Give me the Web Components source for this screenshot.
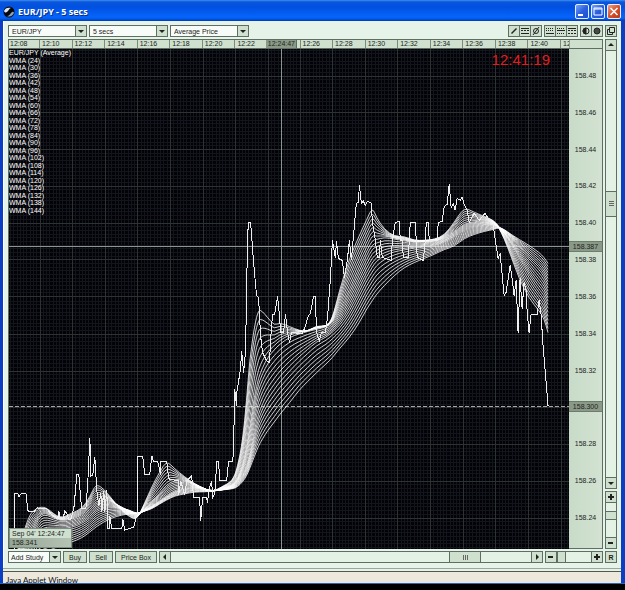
<!DOCTYPE html>
<html lang="en">
<head>
<meta charset="utf-8">
<title>EUR/JPY - 5 secs</title>
<style>
html,body{margin:0;height:100%;background:#000}
body{display:flex;flex-direction:column;font:7px/9px "Liberation Sans",Arial,sans-serif;color:#1c241c;
--panel:#e6f3e8;--face:#cfe0cf;--edge:#5f6e62;--mark:#8b9a88}
</style>
</head>
<body>
<app-window></app-window>
<script>
const define=(name,html,setup)=>customElements.define(name,class extends HTMLElement{
  connectedCallback(){
    if(this.shadowRoot)return;
    const t=document.createElement('template');
    t.innerHTML='<style>*{box-sizing:border-box}'+html;
    this.attachShadow({mode:'open'}).append(t.content.cloneNode(true));
    if(setup)setup.call(this,this.shadowRoot);
  }
});

define('tool-button',`
:host{display:flex;min-width:12px;height:12px}
button{flex:1;display:flex;align-items:center;justify-content:center;margin:0;padding:0 4px;border:1px solid var(--edge);background:var(--face);color:inherit;font:inherit;white-space:nowrap}
:host([icon]) button{padding:0}
::slotted(svg){display:block;width:10px;height:10px}
</style><button type="button"><slot></slot></button>`,function(r){
  const l=this.getAttribute('label');if(l)r.querySelector('button').setAttribute('aria-label',l);
});

define('combo-box',`
:host{display:grid;height:12px;grid-template-columns:1fr 12px;border:1px solid var(--edge);background:var(--face)}
select{grid-area:1/1/2/3;appearance:none;margin:0;padding:0 14px 0 3px;border:0;border-radius:0;font:inherit;color:inherit;min-width:0;width:100%;background:linear-gradient(#f8fcf8,#f8fcf8) no-repeat 0 0/calc(100% - 11px) 100%}
:host(.study) select{padding:0 12px 0 2px}
svg{grid-area:1/2/2/3;pointer-events:none;width:11px;height:10px;border-left:1px solid var(--edge);justify-self:end}
</style><select><option></option></select><svg viewBox="0 0 10 10" aria-hidden="true"><path d="M2 4h6L5 7z" fill="#222"/></svg>`,function(r){
  r.querySelector('option').textContent=this.getAttribute('value');
  r.querySelector('select').setAttribute('aria-label',this.getAttribute('label'));
});

define('scroll-range',`
:host{display:flex;border:1px solid var(--edge);background:#e4f2e6;--length:32px;--grip:none}
:host([vertical]){flex-direction:column;width:12px}
:host(:not([vertical])){height:12px}
button{flex:none;width:11px;height:10px;border:0;border-right:1px solid var(--edge);padding:0;margin:0;background:var(--face);display:flex;align-items:center;justify-content:center}
button:last-of-type{border-right:0;border-left:1px solid var(--edge)}
:host([vertical]) button{width:10px;height:11px;border:0;border-bottom:1px solid var(--edge)}
:host([vertical]) button:last-of-type{border:0;border-top:1px solid var(--edge)}
svg{width:10px;height:10px;fill:#222}
input{appearance:none;flex:1;min-width:0;min-height:0;margin:0;background:none;height:10px}
:host([vertical]) input{writing-mode:vertical-lr;width:10px;height:auto}
input::-webkit-slider-thumb{appearance:none;width:var(--length);height:10px;border:solid var(--edge);border-width:0 1px;background:var(--grip),linear-gradient(var(--face),var(--face))}
:host([vertical]) input::-webkit-slider-thumb{width:10px;height:var(--length);border-width:1px 0}
</style><button type="button" aria-label="Back"></button><input type="range"><button type="button" aria-label="Forward"></button>`,function(r){
  const v=this.hasAttribute('vertical'),z=this.hasAttribute('zoom');
  const minus='M2 4h5v2H2z',plus='M2 4h2V2h2v2h2v2H6v2H4V6H2z';
  const d=z?(v?[plus,minus]:[minus,plus]):(v?['M2 6h6L5 3z','M2 4h6L5 7z']:['M6 2v6L3 5z','M4 2v6l3-3z']);
  r.querySelectorAll('button').forEach((b,i)=>b.innerHTML='<svg viewBox="0 0 10 10"><path d="'+d[i]+'"/></svg>');
  const n=r.querySelector('input');n.max=1000;n.value=this.getAttribute('value');
  n.setAttribute('aria-label',this.getAttribute('label'));
});

define('title-bar',`
:host{display:flex;align-items:center;height:21px;flex:none;padding:2px 4px 0 3px;gap:3px;color:#fff;background:linear-gradient(#3c8ff0 0,#0b55dc 2px,#0050e0 7px,#0665fb 17px,#0058e8 19px,#0038ae)}
h1{flex:1;margin:0;font:bold 9px/16px "Open Sans","Noto Sans",sans-serif;text-shadow:1px 1px #08308a}
.logo{width:12px;height:12px}
button{width:14px;height:15px;padding:0;border:1px solid #e6efff;border-radius:2px;background:linear-gradient(135deg,#7ba4f4,#2a5fe0 50%,#1f50cc)}
button+button{margin-left:-1px}
button.close{background:linear-gradient(135deg,#f0a286,#d9502a 50%,#b83a14)}
button svg{display:block;width:12px;height:13px}
</style>
<svg class="logo" viewBox="0 0 12 12"><circle cx="6" cy="6" r="5.5" fill="#05080f"/><path d="M1 5C2 2 5 1 8 2C6 2.500 6 4 4.500 5.500S2 7 1 5z" fill="#dde7ef"/><path d="M4 10C6 10 7 8 8 7s2-2 3-.5C10.500 9.500 7 11.500 4 10z" fill="#8fa5b5"/></svg>
<h1>EUR/JPY - 5 secs</h1>
<button type="button" aria-label="Minimize"><svg viewBox="0 0 12 13"><path d="M2 9h5v2H2z" fill="#fff"/></svg></button>
<button type="button" aria-label="Maximize"><svg viewBox="0 0 12 13"><path d="M2 3h8v7H2zM2 4h8" fill="none" stroke="#fff"/></svg></button>
<button type="button" class="close" aria-label="Close"><svg viewBox="0 0 12 13"><path d="M2.500 3l7 7m0-7l-7 7" stroke="#fff" stroke-width="1.600"/></svg></button>`);

define('top-tools',`
:host{display:flex;gap:2px;height:12px;align-items:stretch}
.wide{width:79px}.gap{flex:1}.group{display:flex}.group tool-button{width:12px}.group tool-button+tool-button{margin-left:-1px}
svg{fill:none;stroke:#222}
</style>
<combo-box class="wide" label="Instrument" value="EUR/JPY"></combo-box>
<combo-box class="wide" label="Interval" value="5 secs"></combo-box>
<combo-box class="wide" label="Price type" value="Average Price"></combo-box>
<div class="gap"></div>
<div class="group">
<tool-button icon label="Trend line"><svg viewBox="0 0 10 10"><path d="M2.500 7.500l5-5" stroke-width="1.400"/></svg></tool-button>
<tool-button icon label="Horizontal lines"><svg viewBox="0 0 10 10"><path d="M1 2.500h8M1 7.500h8"/><path d="M1 4.500h8" stroke-dasharray="2 1"/></svg></tool-button>
<tool-button icon label="Clear lines"><svg viewBox="0 0 10 10"><circle cx="5" cy="5" r="2.500"/><path d="M2 9l6-8"/></svg></tool-button>
</div>
<div class="group">
<tool-button icon label="Dotted grid"><svg viewBox="0 0 10 10"><path d="M1 2.500h8M1 4.500h8" stroke-dasharray="1 1"/><path d="M1 7.500h8"/></svg></tool-button>
<tool-button icon label="Dashed grid"><svg viewBox="0 0 10 10"><path d="M1 2.500h8M1 7.500h8" stroke-dasharray="1 1"/><path d="M1 4.500h8"/></svg></tool-button>
<tool-button icon label="Line grid"><svg viewBox="0 0 10 10"><path d="M1 2.500h8"/><path d="M1 4.500h8M1 7.500h8" stroke-dasharray="2 1"/></svg></tool-button>
</div>
<div class="group">
<tool-button icon label="Contrast"><svg viewBox="0 0 10 10"><circle cx="5" cy="5" r="3"/><path d="M5 2a3 3 0 0 0 0 6z" fill="#222"/></svg></tool-button>
<tool-button icon label="Fill"><svg viewBox="0 0 10 10"><circle cx="5" cy="5" r="3" fill="#454b45"/></svg></tool-button>
</div>
<tool-button icon label="Detach"><svg viewBox="0 0 10 10"><path d="M3.500 1.500h5v5h-5zM3.500 3.500h-2v5h5v-2"/></svg></tool-button>`);

define('time-axis',`
:host{display:flex;height:10px;border:1px solid var(--edge);background:var(--face);overflow:hidden;position:relative;line-height:8px}
ol{display:flex;flex:1;min-width:0;margin:0;padding:0;list-style:none;overflow:hidden}
li{flex:1 1 0;min-width:0;border-right:1px solid #7c8a7c;padding-left:2px;overflow:hidden;white-space:nowrap}
li:first-child{flex:0 0 31px;padding-left:1px}
li:last-child{flex:0 0 8px;border:0}
.end{flex:0 0 33px;border-left:1px solid #8f9d8f}
mark{position:absolute;left:43.300%;width:31px;height:8px;top:0;padding-left:2px;background:var(--mark);color:inherit;border-right:1px solid var(--edge)}
</style><ol></ol><div class="end"></div><mark>12:24:47</mark>`,function(r){
  const o=r.querySelector('ol');
  for(let m=8;m<=42;m+=2){const li=document.createElement('li');li.textContent=m===24?'':'12:'+String(m).padStart(2,'0');o.append(li);}
});

define('price-axis',`
:host{display:grid;grid-auto-rows:1fr;align-items:center;text-align:center;position:relative;width:34px;flex:none;padding:8px 0 12px;background:linear-gradient(90deg,#c8dbc8,#d3e2d2);border:solid var(--edge);border-width:0 1px 1px 0}
mark{position:absolute;left:0;right:0;height:11px;line-height:9px;background:var(--mark);color:inherit;border:solid #6d7d6c;border-width:1px 0}
</style><mark style="top:38.500%">158.387</mark><mark style="top:70.500%">158.300</mark>`,function(r){
  for(let p=48;p>=24;p-=2){const s=document.createElement('span');if(p!==30)s.textContent='158.'+p;r.append(s);}
});

/* Each row: x, then y of the fastest average, two between, and the slowest one. */
const BANDS=[
[18,548,560,570,580],[24,530,545,556,570],[30,513,535,548,560],[36,508,522,540,555],[41,506,514,532,552],[47,507,513,529,550],[60,518,520,528,545],[72,512,518,527,541],[82,508,514,523,537],
[90,496,506,518,531],[96,483,500,511,526],[104,488,498,508,521],[112,498,501,507,517],[122,510,506,508,514],[130,516,511,509,513],[137,519,516,513,513],
[145,502,508,510,510],[152,486,500,505,508],[160,471,492,500,503],[167,460,483,495,499],[175,468,479,490,495],[185,476,480,487,493],[195,483,484,487,491],
[205,488,488,488,491],[213,491,491,490,490],[222,486,488,489,489],[233,480,484,486,488],[238,466,478,482,486],[243,440,464,474,481],[247,400,445,465,475],
[250,360,425,455,468],[255,325,393,430,455],[259,309,375,415,445],[263,311,365,405,438],[268,317,355,395,430],[275,325,347,385,421],[280,322,342,378,414],[290,326,335,367,402],
[300,330,332,357,389],[308,331,330,350,381],[317,325,328,342,372],[327,326,326,337,363],[333,318,322,332,357],[340,290,310,326,348],[350,258,288,312,337],[360,235,265,292,322],
[367,220,250,278,309],[373,207,238,268,300],[377,217,238,262,294],[385,229,236,256,285],[395,236,238,252,275],[405,236,240,250,267],[415,240,242,248,262],[425,240,241,247,258],
[435,239,241,246,254],[445,235,238,242,249],[455,222,231,237,246],[465,207,223,230,238],[475,212,221,227,234],[485,216,220,225,231],[495,220,222,224,229],[500,228,226,227,227],
[505,238,233,231,229],[512,256,243,237,234],[520,278,258,246,239],[530,298,275,258,245],[540,310,290,268,252],[545,318,296,275,257],[549,332,305,283,263]];
const PRICE='15,548 15,493 18,493 19,496 21,493 26,493 28,510 34,511 37,507 47,508 52,514 58,518 59,510 60,518 63,518 65,510 67,513 69,519 71,518 74,507 77,474 79,474 81,500 82,508 86,508 88,480 90,437 91,475 93,474 95,456 97,490 99,505 101,492 102,511 104,490 105,511 107,489 108,528 110,528 110,515 112,528 122,528 123,518 125,529 134,526 138,510 138,456 143,456 145,474 150,474 152,455 154,461 158,461 161,474 161,461 167,461 169,478 179,480 179,494 181,480 185,494 187,480 192,475 194,497 200,497 201,520 203,497 207,497 208,502 209,490 212,480 213,497 215,493 216,480 217,461 219,461 220,480 227,480 229,461 233,461 234,450 235,388 237,405 237,393 241,368 242,350 244,372 246,350 248,235 249,222 251,222 252,235 254,262 257,295 259,297 261,335 263,352 267,360 270,362 271,340 273,314 275,314 278,296 280,315 281,332 284,332 286,314 288,332 290,342 292,332 303,333 306,325 309,315 311,313 314,296 316,296 317,332 320,340 322,332 326,332 328,318 331,278 333,240 336,258 337,241 339,258 343,260 345,277 348,259 350,240 352,260 355,225 357,203 359,202 360,185 362,203 364,201 366,205 368,201 372,203 373,222 376,240 378,257 380,257 381,240 383,257 392,260 393,240 396,222 400,221 401,240 403,240 404,257 409,257 410,240 411,222 416,222 417,240 418,257 424,260 426,240 427,222 429,222 430,240 438,240 439,222 443,221 445,206 448,204 450,184 452,208 454,203 456,210 458,198 461,200 463,197 465,204 468,210 470,222 475,213 480,220 486,213 490,220 494,225 497,245 499,258 501,253 505,295 507,292 511,265 513,278 515,295 517,280 519,332 521,278 523,308 525,282 527,290 528,310 530,332 532,314 538,314 540,300 542,314 544,345 549,405';

define('price-chart',`
:host{display:block;position:relative;flex:1;min-width:0;background:#020207;color:#fff;overflow:hidden}
.plot{position:absolute;inset:0;width:100%;height:100%;fill:none}
.plot *{vector-effect:non-scaling-stroke}
ul{position:absolute;left:0;top:0;height:165px;display:grid;grid-auto-rows:1fr;margin:0;padding:0;list-style:none;white-space:nowrap}
li{line-height:7px}
time{position:absolute;right:19px;top:2px;font-size:15px;line-height:17px;color:#e21d1d}
.tip{position:absolute;left:0;bottom:1px;width:63px;border:1px solid #7e8d7e;color:#1c241c;line-height:9px}
.tip div{padding-left:2px;background:#d0e0d0}
.tip div+div{background:linear-gradient(90deg,#96a595,#b4c3b3)}
</style><svg class="plot" viewBox="9 49 561 499" preserveAspectRatio="none" role="img" aria-label="EUR/JPY average price with weighted moving averages"></svg>
<ul></ul><time>12:41:19</time><div class="tip"><div>Sep 04' 12:24:47</div><div>158.341</div></div>`,function(r){
  const u=r.querySelector('ul');
  const add=t=>{const li=document.createElement('li');li.textContent=t;u.append(li);};
  add('EUR/JPY (Average)');
  for(let n=24;n<=144;n+=6)add('WMA ('+n+')');
  let minor='',major='',s='';
  for(let i=-9;i<163;i++){const d='M'+(Math.round(39.5+i*3.2625)+.5)+' 49v499';if(i%10)minor+=d;else major+=d;}
  for(let i=-7;i<129;i++){const d='M9 '+(Math.round(75.5+i*3.675)+.5)+'h561';if(i%10)minor+=d;else major+=d;}
  s+='<g shape-rendering="crispEdges"><path d="'+minor+'" stroke="#12151b"/><path d="'+major+'" stroke="#2d3233"/>';
  s+='<path d="M281.500 49v499M9 246.500h561" stroke="#8b9592"/>';
  s+='<path d="M9 405.500h561" stroke="#a4a8a4" stroke-dasharray="4 2"/></g>';
  for(let k=0;k<21;k++){
    const t=k/20*3,j=Math.min(2,Math.floor(t)),f=t-j;
    const p=BANDS.map(b=>[b[0],b[j+1]*(1-f)+b[j+2]*f]);
    let d='M'+p[0];
    for(let i=1;i<p.length-1;i++)d+='Q'+p[i]+' '+(p[i][0]+p[i+1][0])/2+','+(p[i][1]+p[i+1][1])/2;
    d+='L'+p[p.length-1];
    s+='<path d="'+d+'" stroke="#fff" stroke-width=".8"/>';
  }
  s+='<polyline points="'+PRICE+'" stroke="#eee" shape-rendering="crispEdges"/>';
  r.querySelector('svg').innerHTML=s;
});

define('bottom-tools',`
:host{display:flex;gap:2px;height:12px}
.study{width:53px}.time{flex:1;--length:32px;--grip:linear-gradient(90deg,#666 1px,#0000 1px 2px,#666 2px 3px,#0000 3px 4px,#666 4px) no-repeat center/5px 5px}
.short{width:24px}.long{width:42px}
.zoom{width:58px;--length:9px}
tool-button.r{min-width:12px;width:12px;font-weight:bold}
</style><combo-box class="study" label="Study" value="Add Study"></combo-box>
<tool-button class="short">Buy</tool-button><tool-button class="short">Sell</tool-button><tool-button class="long">Price Box</tool-button>
<scroll-range class="time" label="Scroll time" value="848"></scroll-range>
<scroll-range class="zoom" zoom label="Time zoom" value="0"></scroll-range>
<tool-button class="r" icon label="Reset">R</tool-button>`);

define('app-window',`
:host{flex:1;min-height:0;display:flex;flex-direction:column;margin-bottom:6px;background:#0a3fc4;border-bottom:1px solid #2f66b8}
main{flex:1;min-height:0;display:flex;flex-direction:column;gap:2px;margin:0 4px 0 3px;padding:4px 4px 5px;background:var(--panel);border-left:1px solid #fff}
.work{flex:1;min-height:0;display:flex;gap:2px}
.left{flex:1;min-width:0;display:flex;flex-direction:column}
.row{flex:1;min-height:0;display:flex;border-left:1px solid var(--edge)}
aside{display:flex;flex-direction:column;gap:2px}
.price{flex:1;--length:26px;--grip:linear-gradient(#666 1px,#0000 1px 2px,#666 2px 3px,#0000 3px 4px,#666 4px) no-repeat center/5px 5px}
.zoom{height:58px;--length:9px}
footer{flex:none;height:15px;margin:0 4px 0 3px;padding:5px 0 0 3px;overflow:hidden;background:#ece9dc;border-top:1px solid #9aa79b;box-shadow:inset 0 2px var(--panel),inset 0 3px #55564e;font:8px/12px Lato,sans-serif;color:#111}
</style><title-bar></title-bar>
<main><top-tools></top-tools>
<div class="work"><div class="left"><time-axis></time-axis><div class="row"><price-chart></price-chart><price-axis></price-axis></div></div>
<aside><scroll-range class="price" vertical label="Scroll price" value="349"></scroll-range><scroll-range class="zoom" vertical zoom label="Price zoom" value="300"></scroll-range></aside></div>
<bottom-tools></bottom-tools></main>
<footer>Java Applet Window</footer>`);
</script>
</body>
</html>
